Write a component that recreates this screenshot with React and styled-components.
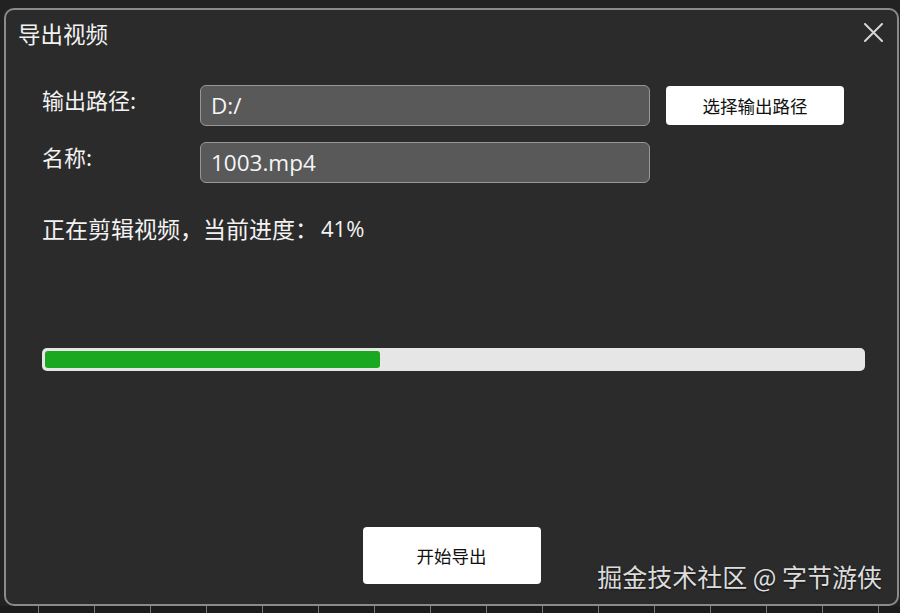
import React from 'react';
import styled, { createGlobalStyle } from 'styled-components';

const GlobalStyle = createGlobalStyle`
  html, body {
    margin: 0;
    padding: 0;
    background: #222222;
    overflow: hidden;
  }
  body {
    font-family: "Open Sans", "Noto Sans CJK SC", sans-serif;
  }
`;

const Screen = styled.div`
  width: 900px;
  height: 613px;
  box-sizing: border-box;
  padding: 8px 1px 0 4px;
  display: flex;
  flex-direction: column;
`;

const Dialog = styled.div`
  position: relative;
  flex: 1;
  display: flex;
  flex-direction: column;
  background: #2b2b2b;
  border: 2px solid #8a8a8a;
  border-radius: 10px;
  box-sizing: border-box;
`;

const Header = styled.div`
  height: 46px;
  display: flex;
  align-items: center;
  justify-content: space-between;
  padding: 0 14px 0 12px;
`;

const Title = styled.div`
  font-family: "Noto Sans CJK SC", sans-serif;
  font-size: 22.5px;
  color: #f2f2f2;
`;

const Close = styled.button`
  width: 20px;
  height: 20px;
  padding: 0;
  border: 0;
  background: none;
  display: flex;
  align-items: center;
  justify-content: center;
  margin-top: -2px;
`;

const Body = styled.div`
  flex: 1;
  display: flex;
  flex-direction: column;
  padding: 29px 0 20px 36px;
`;

const Form = styled.div`
  display: grid;
  grid-template-columns: 142px 450px 178px;
  column-gap: 16px;
  row-gap: 16px;
  align-items: start;
`;

const Label = styled.div`
  font-family: "Noto Sans CJK SC", sans-serif;
  font-size: 22px;
  line-height: 28px;
  color: #f2f2f2;
  grid-column: 1;
  white-space: nowrap;
`;

const Field = styled.div`
  height: 41px;
  box-sizing: border-box;
  border: 1.5px solid #979797;
  border-radius: 6px;
  background: #595959;
  display: flex;
  align-items: center;
  padding-left: 10px;
  font-family: "Open Sans", "Noto Sans CJK SC", sans-serif;
  font-size: 22.5px;
  color: #f5f5f5;
`;

const WhiteButton = styled.button`
  width: 178px;
  height: ${p => p.$tall ? 57 : 39}px;
  margin-top: ${p => p.$tall ? 0 : 1}px;
  border: 0;
  border-radius: 4px;
  background: #ffffff;
  color: #111111;
  font-family: "Noto Sans CJK SC", sans-serif;
  font-size: 17.5px;
  padding: 0;
  display: flex;
  align-items: center;
  justify-content: center;
`;

const Status = styled.div`
  margin-top: 31px;
  display: flex;
  gap: 3px;
  font-family: "Noto Sans CJK SC", sans-serif;
  font-size: 23px;
  line-height: 28px;
  color: #f2f2f2;
  white-space: pre;
`;

const Percent = styled.span`
  font-family: "Open Sans", "Noto Sans CJK SC", sans-serif;
  font-size: 22px;
`;

const Track = styled.div`
  margin-top: 106px;
  width: 823px;
  height: 23px;
  box-sizing: border-box;
  padding: 3px;
  background: #e6e6e6;
  border-radius: 5px;
`;

const Fill = styled.div`
  height: 100%;
  background: #19a81f;
  border-radius: 3px;
`;

const Footer = styled.div`
  margin-top: auto;
  margin-left: -36px;
  display: flex;
  justify-content: center;
`;

const Watermark = styled.div`
  position: absolute;
  right: 15px;
  bottom: 10px;
  font-family: "Noto Sans CJK SC", sans-serif;
  font-size: 25px;
  color: #dcdcdc;
  text-shadow: 0 1px 2px rgba(0, 0, 0, 0.6);
`;

const Timeline = styled.div`
  height: 7px;
  margin: 0 -1px 0 -4px;
  background-color: #1c1c1c;
  background-image: repeating-linear-gradient(
    to right,
    transparent 0,
    transparent 38px,
    #7a7a7a 38px,
    #7a7a7a 39px,
    transparent 39px,
    transparent 56px
  );
`;

const CloseIcon = () => (
  <svg width="19" height="19" viewBox="0 0 19 19">
    <path d="M1 1 L18 18 M18 1 L1 18" stroke="#d6d6d6" strokeWidth="2" strokeLinecap="round" />
  </svg>
);

export default function App() {
  const progress = 41;
  return (
    <>
      <GlobalStyle />
      <Screen>
        <Dialog>
          <Header>
            <Title>导出视频</Title>
            <Close aria-label="close"><CloseIcon /></Close>
          </Header>
          <Body>
            <Form>
              <Label>输出路径:</Label>
              <Field>D:/</Field>
              <WhiteButton>选择输出路径</WhiteButton>
              <Label>名称:</Label>
              <Field>1003.mp4</Field>
            </Form>
            <Status>
              <span>正在剪辑视频，当前进度：</span>
              <Percent>{progress}%</Percent>
            </Status>
            <Track>
              <Fill style={{ width: `${progress}%` }} />
            </Track>
            <Footer>
              <WhiteButton $tall>开始导出</WhiteButton>
            </Footer>
          </Body>
          <Watermark>掘金技术社区 @ 字节游侠</Watermark>
        </Dialog>
        <Timeline />
      </Screen>
    </>
  );
}
